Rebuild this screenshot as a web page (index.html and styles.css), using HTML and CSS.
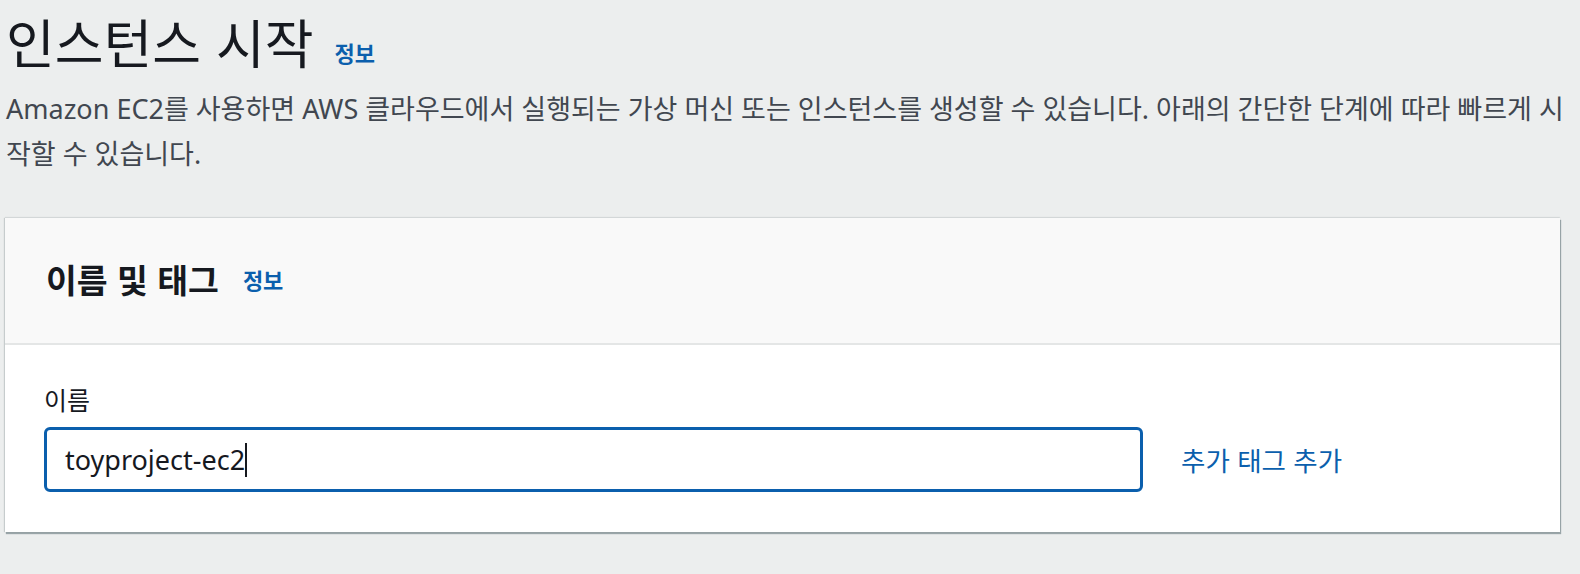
FILE: index.html
```html
<!DOCTYPE html>
<html lang="ko">
<head>
<meta charset="utf-8">
<link rel="stylesheet" href="styles.css">
</head>
<body>
<div class="page">
  <div class="page-head">
    <h1 class="title">인스턴스 시작<a class="info info-lg">정보</a></h1>
    <p class="desc">Amazon EC2를 사용하면 AWS 클라우드에서 실행되는 가상 머신 또는 인스턴스를 생성할 수 있습니다. 아래의 간단한 단계에 따라 빠르게 시작할 수 있습니다.</p>
  </div>
  <section class="card">
    <header class="card-head">
      <h2 class="card-title">이름 및 태그</h2>
      <a class="info info-md">정보</a>
    </header>
    <div class="card-body">
      <label class="label">이름</label>
      <div class="row">
        <div class="input"><span class="value">toyproject-ec2</span><span class="caret"></span></div>
        <a class="link">추가 태그 추가</a>
      </div>
    </div>
  </section>
</div>
</body>
</html>
```

FILE: styles.css
```css
* { box-sizing: border-box; }
html, body { margin: 0; padding: 0; }
body {
  background: #eceeee;
  font-family: "Noto Sans", "Noto Sans CJK KR", sans-serif;
  color: #16191f;
  width: 1580px;
  height: 574px;
  overflow: hidden;
}
.page-head { padding-left: 6px; padding-top: 5px; }
.title {
  margin: 0;
  font-family: "Noto Sans CJK KR", sans-serif;
  font-weight: 400;
  font-size: 53px;
  line-height: 72px;
  height: 72px;
  color: #16191f;
}
.info {
  color: #0b5fad;
  font-weight: 700;
  font-family: "Noto Sans CJK KR", sans-serif;
  line-height: 1;
}
.info-lg { font-size: 22px; margin-left: 21px; position: relative; top: -2px; }
.info-md { font-size: 22px; }
.desc {
  margin: 9px 0 0 0;
  font-size: 27px;
  line-height: 45px;
  color: #414750;
  width: 1558px;
}
.card {
  margin: 42px 0 0 5px;
  width: 1555px;
  background: #fff;
  box-shadow: 1px 2px 1px rgba(0, 28, 36, 0.35), -1px 0 1px rgba(0,28,36,0.15), 0 -1px 1px rgba(0,28,36,0.08);
}
.card-head {
  height: 127px;
  background: #f9f9f9;
  border-bottom: 2px solid #e4e6e6;
  display: flex;
  align-items: center;
  padding-left: 41px;
  gap: 24px;
  padding-bottom: 4px;
}
.card-title {
  margin: 0;
  font-family: "Noto Sans CJK KR", sans-serif;
  font-size: 33.5px;
  line-height: 40px;
  font-weight: 700;
  color: #16191f;
}
.card-body {
  padding: 38px 0 40px 39px;
}
.label {
  display: block;
  font-family: "Noto Sans CJK KR", sans-serif;
  font-size: 25px;
  line-height: 32px;
  color: #16191f;
  margin-bottom: 12px;
}
.row {
  display: flex;
  align-items: center;
  gap: 38px;
}
.input {
  width: 1099px;
  height: 65px;
  border: 3px solid #0b5fad;
  border-radius: 6px;
  background: #fff;
  display: flex;
  align-items: center;
  padding-left: 18px;
  font-size: 27px;
  color: #16191f;
}
.caret {
  width: 2px;
  height: 34px;
  background: #16191f;
}
.link {
  font-family: "Noto Sans CJK KR", sans-serif;
  font-size: 26.5px;
  color: #0b5fad;
}
```
